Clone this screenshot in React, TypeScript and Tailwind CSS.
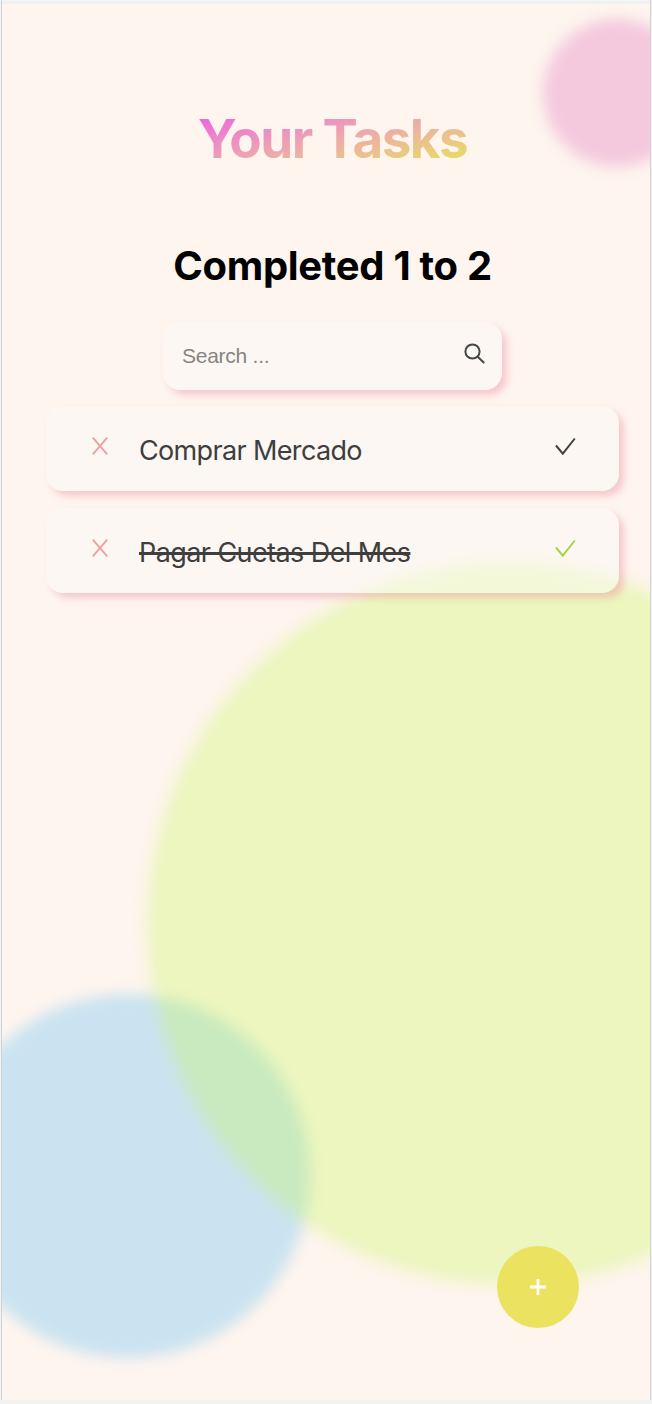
const tasks = [
  { title: "Comprar Mercado", done: false, tracking: "tracking-[-0.65px]" },
  { title: "Pagar Cuetas Del Mes", done: true, tracking: "tracking-[-0.58px]" },
];

function Blobs() {
  return (
    <div className="pointer-events-none absolute inset-0 overflow-hidden">
      <div className="absolute left-[541px] top-[19px] size-[148px] rounded-full bg-[#f4c9dd] blur-[7px]" />
      <div className="absolute left-[-56px] top-[994px] size-[364px] rounded-full bg-[#cbe3f0] blur-[7px]" />
      <div className="absolute left-[145px] top-[563px] size-[722px] rounded-full bg-[#c4f851]/31 blur-[8px]" />
    </div>
  );
}

function Task({ title, done, tracking }: (typeof tasks)[number]) {
  return (
    <li className="flex h-[85px] items-center rounded-[17px] bg-[#fbfbf8]/45 pl-[46px] pr-[43px] shadow-[5px_5px_7px_rgba(237,130,150,0.38)]">
      <svg className="mb-[5px] h-[18px] w-[16px] shrink-0" viewBox="0 0 16 18" fill="none" stroke="#eda09c" strokeWidth="1.9">
        <path d="M.8.7 15.2 17.3M15.2.7.8 17.3" />
      </svg>
      <span
        className={`ml-[31px] mt-[4px] flex-1 text-[27px] leading-8 text-[#3e3e3e] ${tracking} ${done ? "line-through decoration-[3px]" : ""}`}
      >
        {title}
      </span>
      <svg className={`mb-[5px] h-[18px] w-[21px] shrink-0 ${done ? "text-[#a9d348]" : "text-[#3e4240]"}`} viewBox="0 0 21 18" fill="none" stroke="currentColor" strokeWidth="2">
        <path d="M1 8.5 7.8 16.7 19.8 1.5" />
      </svg>
    </li>
  );
}

export default function App() {
  return (
    <div className="h-[1404px] w-[652px] overflow-hidden bg-[#f1f2f2] pl-px font-['Inter',sans-serif]">
      <main className="relative isolate flex h-[1400px] w-[650px] flex-col items-center overflow-hidden border-x border-l-[#cfd3d6] border-r-[#cfd3d8] bg-[#fef5ef] pl-[13px]">
        <Blobs />
        <div className="absolute inset-x-0 top-0 h-[5px] bg-linear-to-b from-[#f5f6f7] via-[#eeefef] to-[#fef5ef]" />
        <h1 className="relative mt-[107px] bg-linear-to-br from-[#ed63df] from-8% to-[#e9db5c] to-90% bg-clip-text text-[53px] font-bold leading-[64px] tracking-[-1.6px] text-transparent">
          Your Tasks
        </h1>
        <h2 className="relative mt-[71px] text-[40px] font-bold leading-[48px] tracking-[-0.3px] text-black">Completed 1 to 2</h2>
        <label className="relative mt-[32px] flex h-[68px] w-[339px] items-center rounded-[17px] bg-[#fbfbf8]/45 pl-[19px] pr-[16px] shadow-[5px_5px_7px_rgba(237,130,150,0.38)]">
          <input
            placeholder="Search ..."
            className="min-w-0 flex-1 bg-transparent font-['Liberation_Sans',sans-serif] text-[21px] tracking-[-0.25px] outline-none placeholder:text-[#868583]"
          />
          <svg className="mb-[5px] size-[22px]" viewBox="0 0 22 22" fill="none" stroke="#454746" strokeWidth="2">
            <circle cx="8.5" cy="8.5" r="7.1" />
            <path d="m13.7 13.7 6.5 6.3" />
          </svg>
        </label>
        <ul className="relative mt-[16px] flex w-[573px] flex-col gap-[17px]">
          {tasks.map((task) => (
            <Task key={task.title} {...task} />
          ))}
        </ul>
        <button aria-label="Add task" className="absolute left-[495px] top-[1246px] flex size-[82px] items-center justify-center rounded-full bg-[#ebe260]">
          <svg className="size-4" viewBox="0 0 16 16" stroke="white" strokeWidth="2.8">
            <path d="M8 0v16M0 8h16" />
          </svg>
        </button>
      </main>
    </div>
  );
}
